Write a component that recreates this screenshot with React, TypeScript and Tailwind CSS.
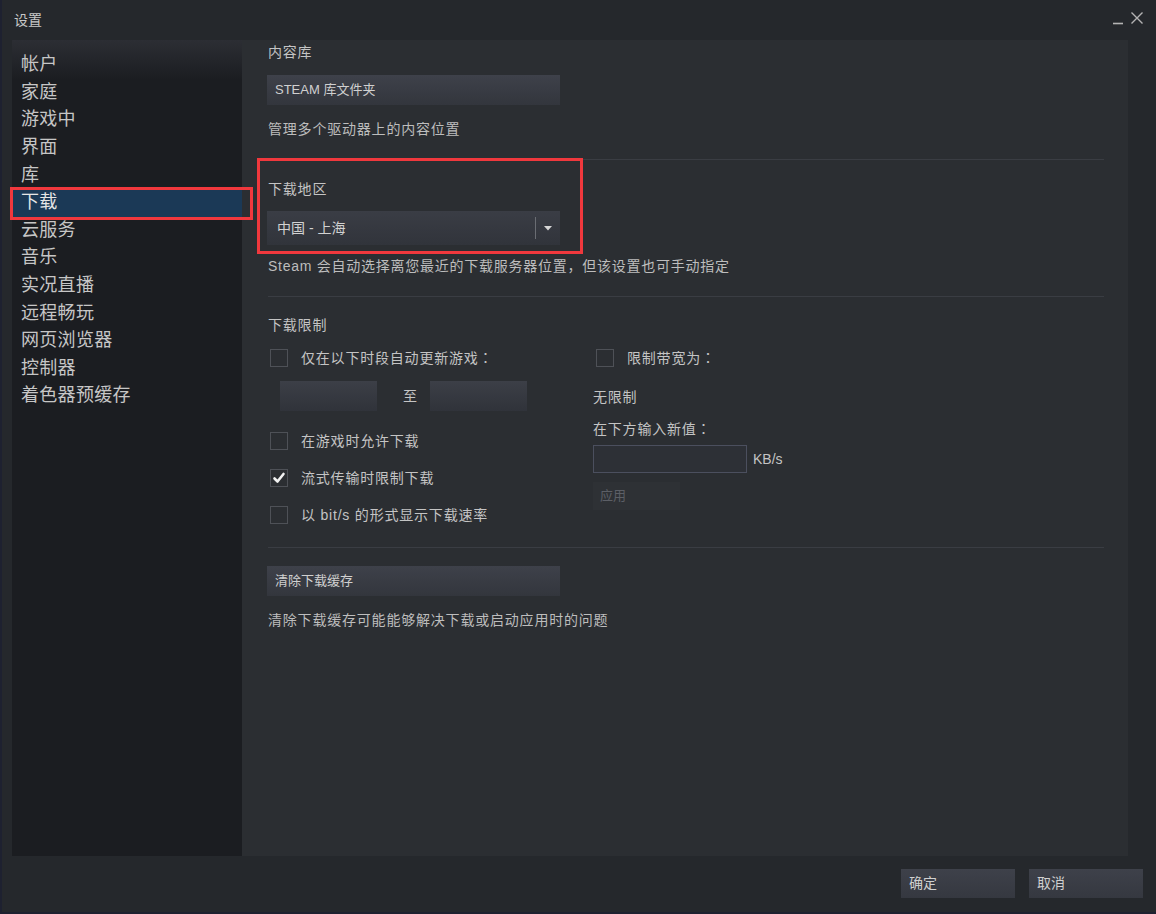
import React from "react";

const FONT = "font-['Liberation_Sans','Noto_Sans_CJK_SC',sans-serif] [text-spacing-trim:space-all]";

const navItems = [
  "帐户",
  "家庭",
  "游戏中",
  "界面",
  "库",
  "下载",
  "云服务",
  "音乐",
  "实况直播",
  "远程畅玩",
  "网页浏览器",
  "控制器",
  "着色器预缓存",
];

// full-width colon rendered centred, as in the reference
const Colon = () => <span className="font-['Noto_Sans_CJK_TC',sans-serif]">：</span>;

const Checkbox = ({ checked = false }: { checked?: boolean }) => (
  <div className="ml-[3px] w-[18px] h-[18px] shrink-0 border-[1.5px] border-[#4e5157] flex items-center justify-center">
    {checked && (
      <svg width="14" height="14" viewBox="0 0 14 14">
        <path d="M2.5 7.5 L5.5 10.5 L11.5 3" fill="none" stroke="#f2f2f2" strokeWidth="2.6" strokeLinecap="round" strokeLinejoin="round" />
      </svg>
    )}
  </div>
);

const CheckRow = ({ label, checked, colon }: { label: string; checked?: boolean; colon?: boolean }) => (
  <div className="flex items-center h-[20px]">
    <Checkbox checked={checked} />
    <span className="ml-[13px] text-[14px] tracking-[0.8px] text-[#c4c4c4]">
      {label}
      {colon && <Colon />}
    </span>
  </div>
);

const Separator = ({ className = "" }: { className?: string }) => (
  <div className={`h-px bg-[#3a3d43] mr-[24px] ${className}`} />
);

const SteamButton = ({ label, className = "" }: { label: string; className?: string }) => (
  <div
    className={`w-[293px] h-[30px] flex items-center pl-[8px] text-[13px] text-[#d0d0d0] bg-gradient-to-b from-[#3e414a] to-[#33363d] ${className}`}
  >
    {label}
  </div>
);

const App = () => {
  return (
    <div className={`relative w-[1156px] h-[914px] bg-[#25282c] flex flex-col ${FONT} border-l-2 border-b-2 border-[#1e2130] overflow-hidden`}>
      {/* title bar */}
      <div className="h-[40px] flex items-center justify-between pl-[12px] pr-[12px] shrink-0">
        <span className="text-[14px] text-[#c8c8c8]">设置</span>
        <div className="flex items-center gap-[6px] pb-[4px]">
          <svg width="12" height="14" viewBox="0 0 12 14">
            <path d="M1 12.5 H11" stroke="#b4b4b4" strokeWidth="1.6" />
          </svg>
          <svg width="14" height="14" viewBox="0 0 14 14">
            <path d="M1.5 1.5 L12.5 12.5 M12.5 1.5 L1.5 12.5" stroke="#b4b4b4" strokeWidth="1.4" />
          </svg>
        </div>
      </div>

      {/* body */}
      <div className="flex ml-[10px] mr-[28px] h-[816px] shrink-0">
        {/* sidebar */}
        <div className="w-[230px] bg-[#1b1d21] flex flex-col relative">
          <div className="absolute inset-x-0 top-0 h-[40px] bg-gradient-to-b from-[#2c2e34] to-[#1b1d21]" />
          <div className="relative pt-[11px]">
            {navItems.map((item) => (
              <div
                key={item}
                className={`h-[27.6px] flex items-center pl-[9px] text-[18px] tracking-[0.3px] ${
                  item === "下载" ? "bg-[#1b3956] text-[#e6e6e6]" : "text-[#c6c6c6]"
                }`}
              >
                {item}
              </div>
            ))}
          </div>
        </div>

        {/* content */}
        <div className="flex-1 bg-[#2b2e32] pl-[25px] pt-[2px] text-[#c4c4c4]">
          <div className="h-[20px] leading-[20px] text-[14px] tracking-[0.8px] pl-[1px]">内容库</div>
          <SteamButton label="STEAM 库文件夹" className="mt-[13px]" />
          <div className="mt-[14px] h-[20px] leading-[20px] text-[14px] tracking-[0.8px] pl-[1px] text-[#bdbdbd]">
            管理多个驱动器上的内容位置
          </div>
          <Separator className="mt-[20px] ml-[1px]" />

          <div className="mt-[19px] h-[20px] leading-[20px] text-[14px] tracking-[0.8px] pl-[1px]">下载地区</div>
          <div className="mt-[12px] w-[293px] h-[34px] flex items-center bg-gradient-to-b from-[#3a3d45] to-[#31343b]">
            <span className="flex-1 pl-[10px] text-[14px] text-[#d2d2d2]">中国 - 上海</span>
            <div className="w-px h-[22px] bg-[#6a6d73]" />
            <div className="w-[24px] flex justify-center">
              <svg width="8" height="5" viewBox="0 0 8 5">
                <path d="M0 0 H8 L4 4.5 Z" fill="#d6d6d6" />
              </svg>
            </div>
          </div>
          <div className="mt-[11px] h-[20px] leading-[20px] text-[14px] tracking-[0.75px] pl-[1px] text-[#bdbdbd]">
            Steam 会自动选择离您最近的下载服务器位置，但该设置也可手动指定
          </div>
          <Separator className="mt-[20px] ml-[1px]" />

          <div className="mt-[18px] h-[20px] leading-[20px] text-[14px] tracking-[0.8px] pl-[1px]">下载限制</div>
          <div className="flex">
            <div className="w-[326px] flex flex-col">
              <div className="mt-[13px]">
                <CheckRow label="仅在以下时段自动更新游戏" colon />
              </div>
              <div className="mt-[13px] flex items-center pl-[13px]">
                <div className="w-[97px] h-[30px] bg-gradient-to-b from-[#3c3f47] to-[#30333a]" />
                <span className="ml-[26px] mr-[13px] text-[14px] text-[#c4c4c4]">至</span>
                <div className="w-[97px] h-[30px] bg-gradient-to-b from-[#3c3f47] to-[#30333a]" />
              </div>
              <div className="mt-[20px]">
                <CheckRow label="在游戏时允许下载" />
              </div>
              <div className="mt-[17px]">
                <CheckRow label="流式传输时限制下载" checked />
              </div>
              <div className="mt-[17px]">
                <CheckRow label="以 bit/s 的形式显示下载速率" />
              </div>
            </div>
            <div className="flex flex-col">
              <div className="mt-[13px]">
                <CheckRow label="限制带宽为" colon />
              </div>
              <div className="mt-[19px] h-[20px] leading-[20px] text-[14px] tracking-[0.8px]">无限制</div>
              <div className="mt-[11px] h-[20px] leading-[20px] text-[14px] tracking-[0.8px]">
                在下方输入新值
                <Colon />
              </div>
              <div className="mt-[7px] flex items-center">
                <div className="w-[154px] h-[28px] border border-[#4b4f5e] bg-[#2d3036]" />
                <span className="ml-[6px] text-[14px] text-[#c4c4c4]">KB/s</span>
              </div>
              <div className="mt-[9px] w-[87px] h-[28px] flex items-center pl-[7px] text-[13px] text-[#5c5f66] bg-[#2e3135]">
                应用
              </div>
            </div>
          </div>
          <Separator className="mt-[22px] ml-[1px]" />

          <SteamButton label="清除下载缓存" className="mt-[18px]" />
          <div className="mt-[14px] h-[20px] leading-[20px] text-[14px] tracking-[0.8px] pl-[1px] text-[#bdbdbd]">
            清除下载缓存可能能够解决下载或启动应用时的问题
          </div>
        </div>
      </div>

      {/* footer */}
      <div className="flex justify-end gap-[14px] pr-[13px] pt-[13px]">
        <div className="w-[114px] h-[29px] flex items-center pl-[8px] text-[14px] text-[#d0d0d0] bg-gradient-to-b from-[#3e414a] to-[#353840]">
          确定
        </div>
        <div className="w-[114px] h-[29px] flex items-center pl-[8px] text-[14px] text-[#d0d0d0] bg-gradient-to-b from-[#3e414a] to-[#353840]">
          取消
        </div>
      </div>

      {/* red annotation boxes */}
      <div className="absolute left-[8px] top-[187px] w-[243px] h-[33px] border-[3px] border-[#f0383d]" />
      <div className="absolute left-[255px] top-[158px] w-[326px] h-[96px] border-[3px] border-[#f0383d]" />
    </div>
  );
};

export default App;
